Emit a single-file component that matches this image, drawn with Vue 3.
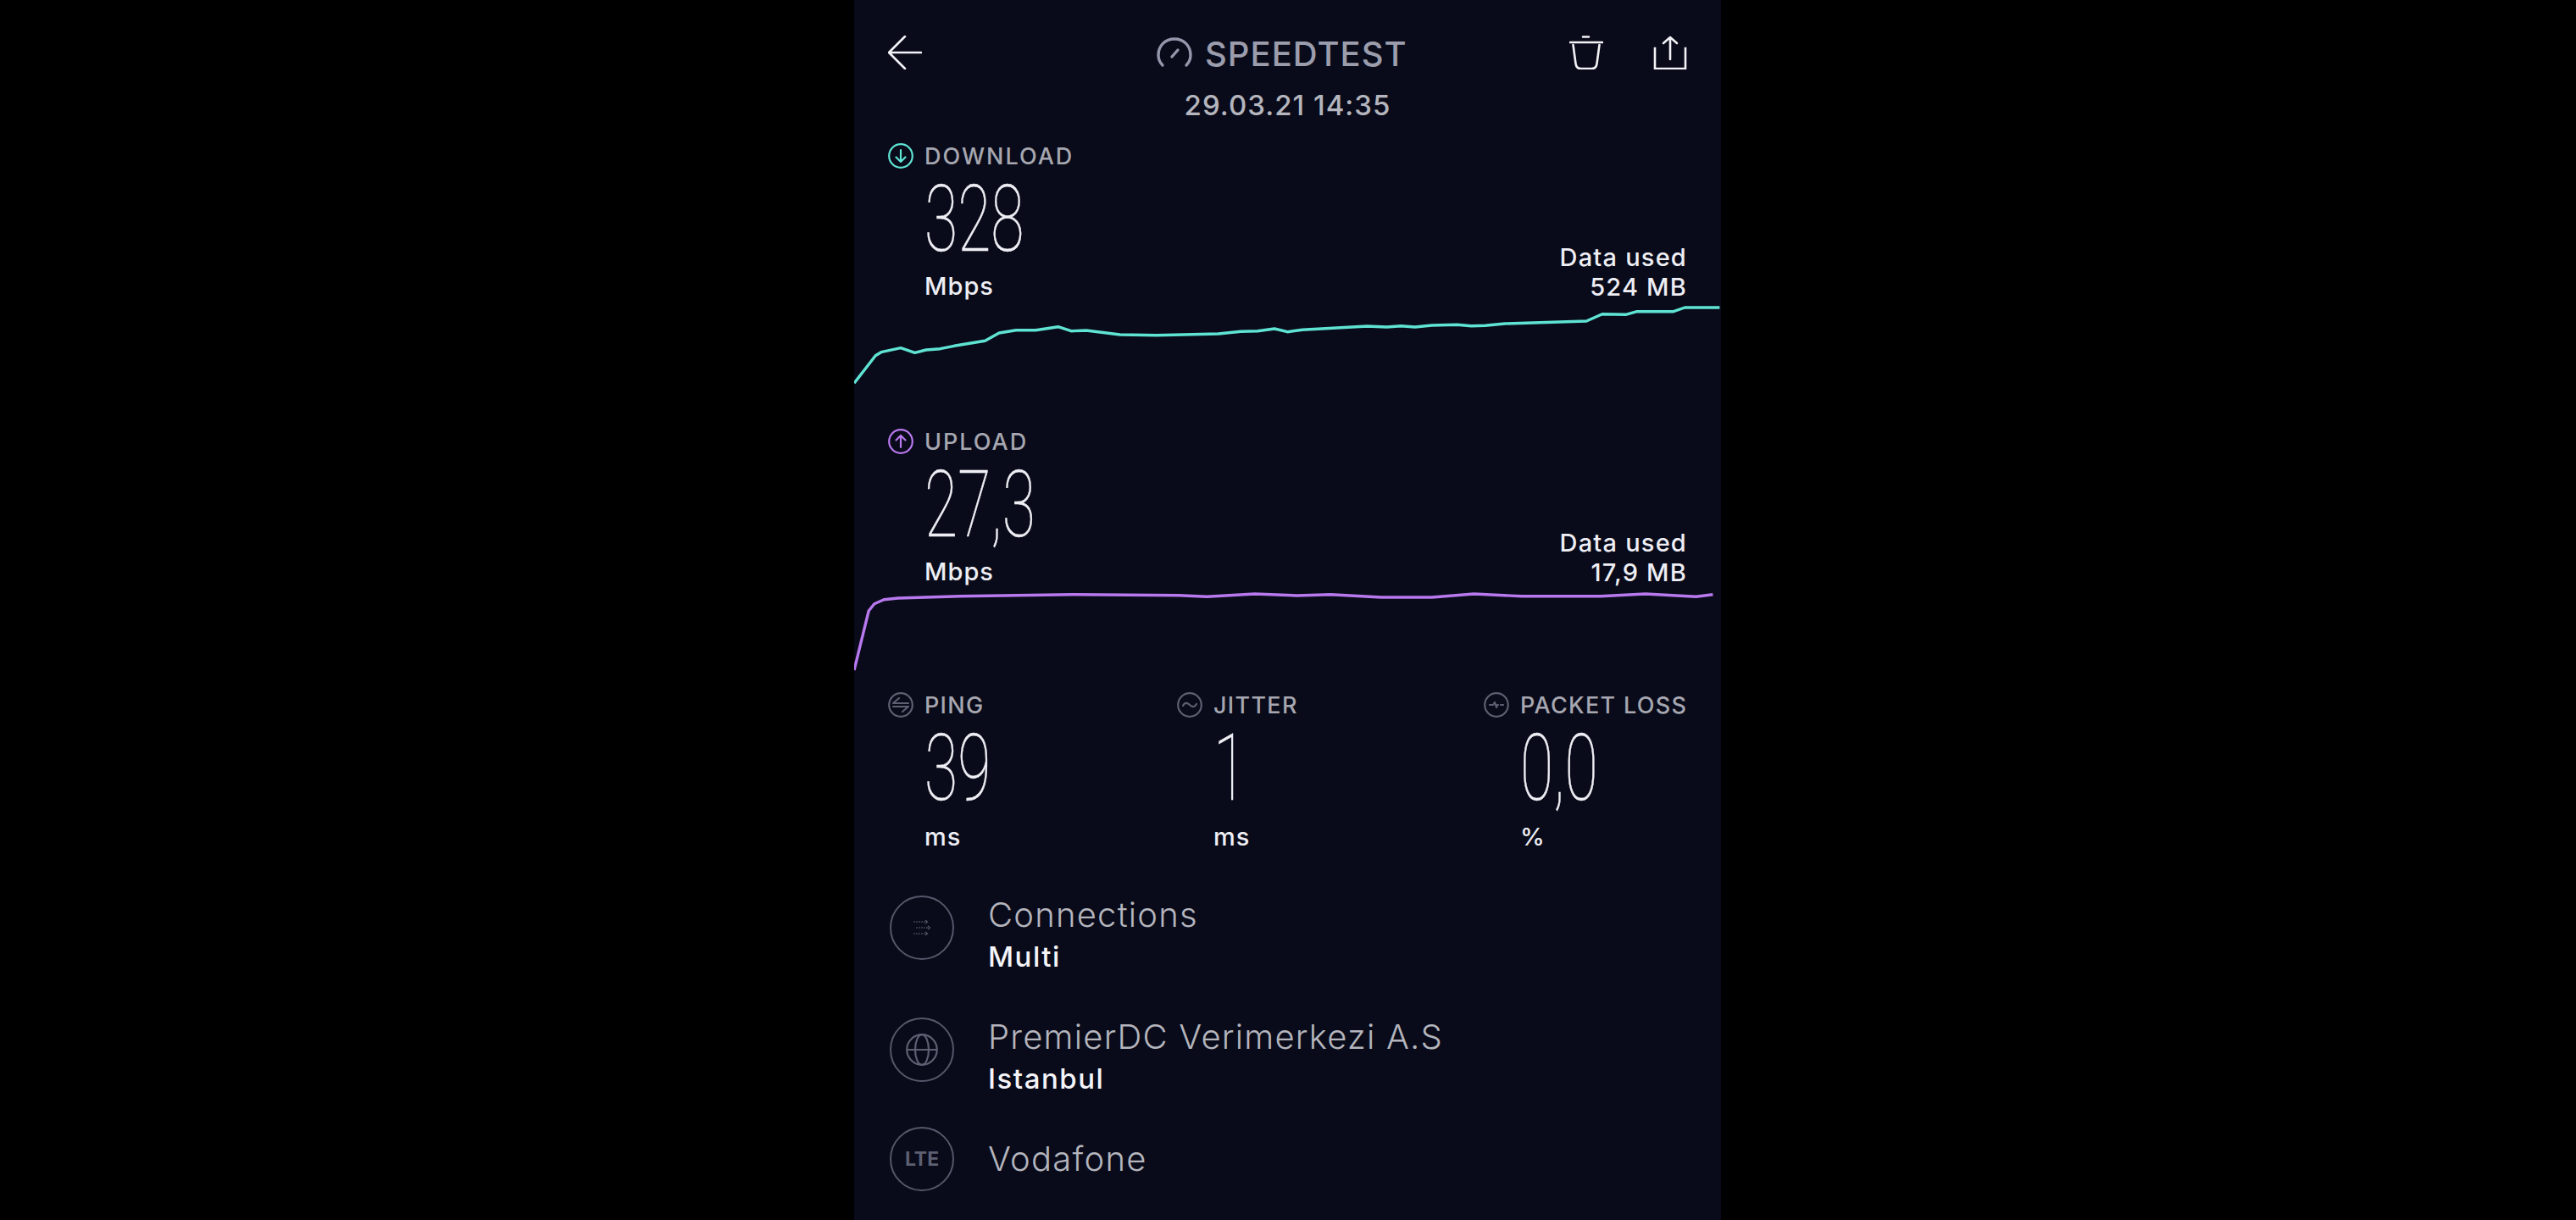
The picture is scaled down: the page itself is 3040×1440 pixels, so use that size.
<script setup>
const toPoints = (pts, offsetY) =>
  pts.map(([x, y]) => `${(x / 1.5077 - 8).toFixed(1)},${(y / 3 - offsetY).toFixed(1)}`).join(' ')

const downloadLine = toPoints([[12,1360],[50,1262],[60,1250],[95,1235],[120,1252],[140,1242],[165,1238],[190,1228],[245,1210],[270,1182],[300,1172],[335,1172],[375,1160],[398,1175],[425,1173],[485,1188],[550,1190],[660,1185],[700,1177],[730,1175],[760,1167],[783,1178],[810,1171],[925,1158],[960,1161],[985,1157],[1010,1161],[1040,1155],[1085,1153],[1110,1157],[1135,1156],[1170,1149],[1315,1140],[1343,1115],[1385,1117],[1405,1106],[1470,1106],[1490,1092],[1552,1092]], 358)

const uploadLine = toPoints([[12,930],[38,720],[48,695],[65,680],[90,675],[200,668],[400,662],[590,665],[640,670],[725,660],[800,666],[860,662],[950,672],[1040,672],[1115,660],[1200,668],[1340,668],[1420,660],[1510,670],[1540,662]], 215)
</script>

<template>
  <main class="phone">
    <header class="topbar">
      <svg class="icon-lg" viewBox="0 0 40 40" fill="none" stroke="#f2f2f6" stroke-width="2.6" stroke-linecap="round" stroke-linejoin="round">
        <path d="M20 1 1 20l19 19M1 20h38" />
      </svg>
      <div class="title">
        <svg class="gauge" viewBox="0 0 42 36" fill="none" stroke="#9497ab" stroke-width="3.4" stroke-linecap="round">
          <path d="M7 33C3 29 2 25 2 21 2 10 10 2 21 2s19 8 19 19c0 4-1 8-5 12" />
          <path d="M18 23l7-8" />
        </svg>
        <span>SPEEDTEST</span>
      </div>
      <div class="actions">
        <svg class="icon-lg" viewBox="0 0 40 40" fill="none" stroke="#f2f2f6" stroke-width="2.6" stroke-linecap="round" stroke-linejoin="round">
          <path d="M1 8h38M16 1.500h7" />
          <path d="M4.500 11l3 22q.8 6 6 6h13q5.200 0 6-6l3-22" />
        </svg>
        <svg class="icon-lg share" viewBox="0 0 40 40" fill="none" stroke="#f2f2f6" stroke-width="2.6" stroke-linecap="square" stroke-linejoin="miter">
          <path d="M2 15v24h36V15" />
          <path d="M20 28V2M12 9l8-7 8 7" stroke-linecap="round" stroke-linejoin="round" />
        </svg>
      </div>
    </header>
    <p class="date">29.03.21 14:35</p>

    <section class="metric">
      <div class="metric-head">
        <div>
          <div class="label">
            <svg class="icon-sm" viewBox="0 0 30 30" fill="none" stroke="#5fe3d3" stroke-width="2.2" stroke-linecap="round" stroke-linejoin="round">
              <circle cx="15" cy="15" r="13.800" />
              <path d="M15 8v14M9.500 16.500 15 22l5.500-5.500" />
            </svg>
            DOWNLOAD
          </div>
          <div class="big"><span>328</span></div>
          <div class="unit">Mbps</div>
        </div>
        <div class="data-used">Data used<br />524 MB</div>
      </div>
      <svg class="chart chart-down" viewBox="0 0 1023 100" fill="none">
        <polyline :points="downloadLine" stroke="#5fe3d3" stroke-width="3.400" stroke-linejoin="round" />
      </svg>
    </section>

    <section class="metric">
      <div class="metric-head">
        <div>
          <div class="label">
            <svg class="icon-sm" viewBox="0 0 30 30" fill="none" stroke="#b878ee" stroke-width="2.2" stroke-linecap="round" stroke-linejoin="round">
              <circle cx="15" cy="15" r="13.800" />
              <path d="M15 22V8M9.500 13.500 15 8l5.500 5.500" />
            </svg>
            UPLOAD
          </div>
          <div class="big"><span>27,3</span></div>
          <div class="unit">Mbps</div>
        </div>
        <div class="data-used">Data used<br />17,9 MB</div>
      </div>
      <svg class="chart chart-up" viewBox="0 0 1023 100" fill="none">
        <polyline :points="uploadLine" stroke="#b878ee" stroke-width="3.400" stroke-linejoin="round" />
      </svg>
    </section>

    <section class="stats">
      <div class="stat">
        <div class="label">
          <svg class="icon-sm" viewBox="0 0 30 30" fill="none" stroke="#5d5f72" stroke-width="2.2" stroke-linecap="round" stroke-linejoin="round">
            <circle cx="15" cy="15" r="13.800" />
            <path d="M6 13h18M13 7l-7 6M6 17h18M17 23l7-6" />
          </svg>
          PING
        </div>
        <div class="big"><span>39</span></div>
        <div class="unit">ms</div>
      </div>
      <div class="stat">
        <div class="label">
          <svg class="icon-sm" viewBox="0 0 30 30" fill="none" stroke="#5d5f72" stroke-width="2.2" stroke-linecap="round" stroke-linejoin="round">
            <circle cx="15" cy="15" r="13.800" />
            <path d="M7 16c2-4 5-4 8-1s6 3 8-1" />
          </svg>
          JITTER
        </div>
        <div class="big"><span>1</span></div>
        <div class="unit">ms</div>
      </div>
      <div class="stat">
        <div class="label">
          <svg class="icon-sm" viewBox="0 0 30 30" fill="none" stroke="#5d5f72" stroke-width="2.2" stroke-linecap="round" stroke-linejoin="round">
            <circle cx="15" cy="15" r="13.800" />
            <path d="M7 15h4l2-3 2 6 1-3h1M20 15h3" />
          </svg>
          PACKET LOSS
        </div>
        <div class="big"><span>0,0</span></div>
        <div class="unit">%</div>
      </div>
    </section>

    <section class="info">
      <div class="info-row two-line row-connections">
        <div class="badge">
          <svg viewBox="0 0 20 18" width="20" height="18" fill="none" stroke="#5d5f72" stroke-width="1.100">
            <path d="M0 2h15" stroke-dasharray="2 1" />
            <path d="M3 9h15" stroke-dasharray="2 1" />
            <path d="M0 16h15" stroke-dasharray="2 1" />
            <path d="M14 0l2.500 2L14 4M17 7l2.500 2L17 11M14 14l2.500 2-2.500 2" />
          </svg>
        </div>
        <div class="info-text">
          <div class="info-name">Connections</div>
          <div class="info-sub">Multi</div>
        </div>
      </div>
      <div class="info-row two-line row-server">
        <div class="badge">
          <svg viewBox="0 0 38 38" width="38" height="38" fill="none" stroke="#5d5f72" stroke-width="2.200">
            <circle cx="19" cy="19" r="17.800" />
            <ellipse cx="19" cy="19" rx="8" ry="17.800" />
            <path d="M1 19h36" />
          </svg>
        </div>
        <div class="info-text">
          <div class="info-name">PremierDC Verimerkezi A.S</div>
          <div class="info-sub">Istanbul</div>
        </div>
      </div>
      <div class="info-row">
        <div class="badge lte">LTE</div>
        <div class="info-name">Vodafone</div>
      </div>
    </section>
  </main>
</template>

<style>
html,
body {
  margin: 0;
  background: #000;
}
</style>

<style scoped>
.phone {
  box-sizing: border-box;
  width: 1023px;
  height: 1440px;
  margin-left: calc(50% - 512px);
  padding-top: 42px;
  overflow: hidden;
  background: #090b1a;
  font-family: Inter, "Liberation Sans", sans-serif;
  color: #f4f4f8;
}

.topbar {
  display: grid;
  grid-template-columns: 40px 1fr 140px;
  padding: 0 40px;
  align-items: start;
}

.icon-lg {
  display: block;
  width: 40px;
  height: 40px;
}

.title {
  display: flex;
  align-items: center;
  gap: 15px;
  margin-left: 277px;
  height: 40px;
  color: #9b9dad;
  font-size: 40px;
  font-weight: 500;
  letter-spacing: 1px;
  line-height: 40px;
}

.title span {
  padding-top: 4px;
}

.gauge {
  flex: none;
  width: 42px;
  height: 36px;
}

.actions {
  display: flex;
  justify-content: space-between;
  margin-left: 1px;
}

.date {
  margin: 20px 0 0;
  height: 44px;
  text-align: center;
  color: #b4b5bd;
  font-size: 33px;
  font-weight: 500;
  letter-spacing: 1px;
  line-height: 44px;
}

.metric {
  margin-top: 21px;
}

.metric + .metric {
  margin-top: 49px;
}

.metric-head {
  box-sizing: border-box;
  display: flex;
  justify-content: space-between;
  align-items: flex-end;
  height: 190px;
  padding: 0 40px;
}

.metric + .metric .metric-head {
  padding-bottom: 2px;
}

.label {
  display: flex;
  align-items: center;
  gap: 13px;
  height: 30px;
  color: #a6a7b0;
  font-size: 27px;
  font-weight: 500;
  letter-spacing: 2px;
  white-space: nowrap;
}

.stat .label {
  letter-spacing: 1.300px;
}

.icon-sm {
  flex: none;
  width: 30px;
  height: 30px;
}

.big {
  height: 120px;
  margin-left: 43px;
  font-family: Roboto, sans-serif;
  font-size: 110px;
  font-weight: 100;
  line-height: 120px;
  color: #eeeef4;
  -webkit-text-stroke: 0.500px #eeeef4;
}

.big span {
  display: inline-block;
  transform: scaleX(0.65);
  transform-origin: left center;
}

.unit {
  height: 38px;
  margin-left: 43px;
  font-size: 29px;
  font-weight: 500;
  letter-spacing: 1px;
  line-height: 38px;
  color: #eeeef4;
}

.data-used {
  padding-bottom: 1px;
  text-align: right;
  font-size: 29px;
  font-weight: 500;
  letter-spacing: 1.200px;
  line-height: 35px;
  color: #eeeef4;
}

.chart {
  display: block;
  width: 1023px;
  height: 100px;
}

.stats {
  display: grid;
  grid-template-columns: 341px 362px 1fr;
  margin-top: 21px;
  padding-left: 40px;
}

.stat .unit {
  height: 44px;
  line-height: 41px;
}

.info {
  margin-top: 46px;
  padding-left: 42px;
}

.info-row {
  display: flex;
  align-items: center;
  gap: 40px;
}

.two-line {
  align-items: flex-start;
}

.row-connections {
  margin-bottom: 52px;
}

.row-server {
  margin-bottom: 37px;
}

.info-text {
  padding-top: 1px;
}

.badge {
  box-sizing: border-box;
  display: flex;
  flex: none;
  align-items: center;
  justify-content: center;
  width: 76px;
  height: 76px;
  border: 2.500px solid #55576a;
  border-radius: 50%;
}

.lte {
  color: #5d5f72;
  font-size: 23px;
  font-weight: 700;
}

.info-name {
  color: #b4b5bd;
  font-size: 40px;
  font-weight: 300;
  letter-spacing: 1.200px;
  line-height: 44px;
}

.info-sub {
  margin-top: 7px;
  color: #f4f4f8;
  font-size: 33px;
  font-weight: 500;
  letter-spacing: 1.500px;
  line-height: 40px;
}
</style>
